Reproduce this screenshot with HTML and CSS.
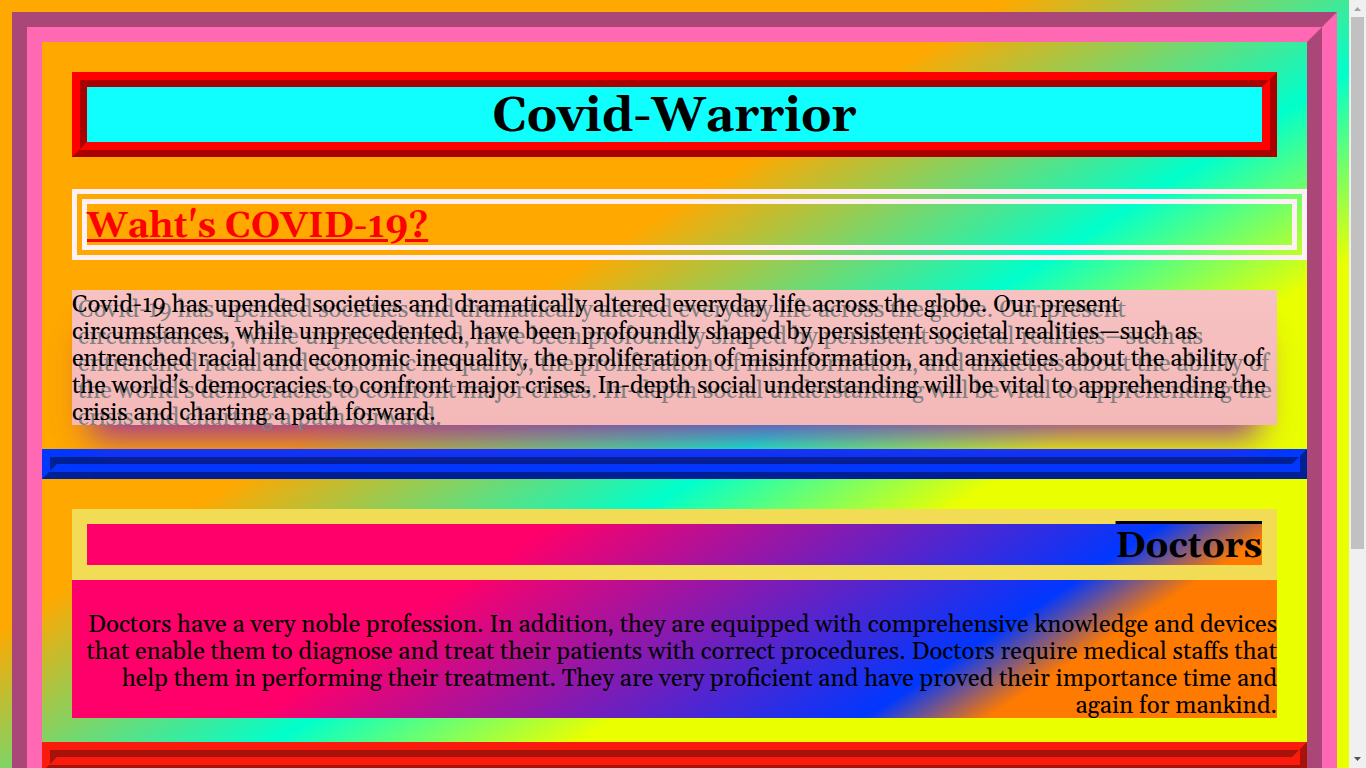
FILE: index.html
```html
<!DOCTYPE html>
<html lang="en">
<head>
<meta charset="utf-8">
<title>Covid-Warrior</title>
<link rel="stylesheet" href="styles.css">
</head>
<body>
<div class="viewport">
  <div class="page">
    <main class="frame">
      <h1 class="title">Covid-Warrior</h1>
      <h2 class="question">Waht's COVID-19?</h2>
      <div class="intro">
        <p class="copy">Covid-19 has upended societies and dramatically altered everyday life across the globe. Our present<br>circumstances, while unprecedented, have been profoundly shaped by persistent societal realities—such as<br>entrenched racial and economic inequality, the proliferation of misinformation, and anxieties about the ability of<br>the world’s democracies to confront major crises. In-depth social understanding will be vital to apprehending the<br>crisis and charting a path forward.</p>
      </div>
      <hr class="rule rule-blue">
      <section class="doctors">
        <h2 class="doctors-title">Doctors</h2>
        <p class="copy">Doctors have a very noble profession. In addition, they are equipped with comprehensive knowledge and devices<br>that enable them to diagnose and treat their patients with correct procedures. Doctors require medical staffs that<br>help them in performing their treatment. They are very proficient and have proved their importance time and<br>again for mankind.</p>
      </section>
      <hr class="rule rule-red">
    </main>
  </div>
  <div class="scrollbar" aria-hidden="true">
    <svg class="arrow" width="17" height="17" viewBox="0 0 17 17"><path d="M5 11h7L8.500 7z" fill="#a3a3a3"/></svg>
    <div class="track"><div class="thumb"></div></div>
    <svg class="arrow" width="17" height="17" viewBox="0 0 17 17"><path d="M5 6h7L8.500 10z" fill="#505050"/></svg>
  </div>
</div>
</body>
</html>
```
FILE: styles.css
```css
* { box-sizing: border-box; }
body { margin: 0; font-family: Georgia, Gelasio, "Liberation Serif", serif; color: #000; }
.viewport { display: flex; height: 100vh; overflow: hidden; }
.page {
  flex: 1;
  min-width: 0;
  height: 1060px;
  padding: 12px;
  background: linear-gradient(148deg, #ffa800 33%, #00ffcc 48%, #eaff00 58%);
}
.frame { min-height: 100%; padding: 30px; border: 30px groove #ff69b4; }
.title {
  margin: 0 0 32px;
  padding-top: 4px;
  border: 15px ridge #ff0000;
  background: #0fffff;
  font-size: 48px;
  line-height: 51px;
  text-align: center;
}
.question,
.doctors-title { padding-top: 4px; font-size: 36px; line-height: 37px; }
.question {
  margin: 0 -30px 30px 0;
  border: 15px double #fff0f5;
  color: #ff0000;
  text-decoration: underline;
}
.copy {
  margin: 0 0 -2px;
  padding-top: 2px;
  font-size: 24px;
  line-height: 27px;
  white-space: nowrap;
}
.intro {
  display: flow-root;
  position: relative;
  background: linear-gradient(#f7c2c2, #f4b8b8);
  box-shadow: 0 32px 30px -20px rgba(144, 35, 184, 0.8), 0 24px 40px -12px rgba(144, 35, 100, 0.12);
  text-shadow: 6px 5px #808080;
}
.rule { height: 30px; margin: 24px -30px 30px; border: 15px ridge; }
.rule-blue { border-color: #0033e8; }
.rule-red { border-color: #fb1b0e; }
.doctors {
  display: flow-root;
  background: linear-gradient(147deg, #ff006a 33%, #0037ff 73%, #ff7a00 81%);
  text-align: right;
}
.doctors-title {
  margin: 0 0 30px;
  border: 15px solid #f3dc55;
  text-decoration: overline;
}
.scrollbar { display: flex; flex-direction: column; width: 17px; background: #f0f0f0; }
.arrow { display: block; }
.track { flex: 1; padding: 0 2px; }
.thumb { height: 72.5%; background: #c1c1c1; }
```
